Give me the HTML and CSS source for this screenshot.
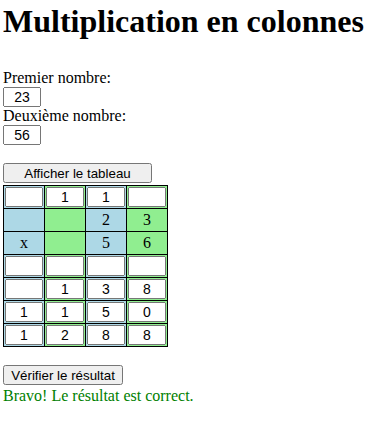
FILE: index.html
```html
<!DOCTYPE html>
<html lang="fr">
<head>
    <meta charset="UTF-8">
    <title>Multiplication en colonnes</title>
    <link rel="stylesheet" href="styles.css">
</head>
<body>
    <h1>Multiplication en colonnes</h1>
    <label for="nombre1">Premier nombre:</label><br>
    <input type="text" id="nombre1" class="nombre" value="23"><br>
    <label for="nombre2">Deuxième nombre:</label><br>
    <input type="text" id="nombre2" class="nombre" value="56"><br><br>
    <button id="afficherBtn">Afficher le tableau</button>

    <table id="tableau">
        <tr>
            <td class="bleu"><input type="text" class="case"></td>
            <td class="vert"><input type="text" class="case" value="1"></td>
            <td class="bleu"><input type="text" class="case" value="1"></td>
            <td class="vert"><input type="text" class="case"></td>
        </tr>
        <tr class="texte">
            <td class="bleu"></td>
            <td class="vert"></td>
            <td class="bleu">2</td>
            <td class="vert">3</td>
        </tr>
        <tr class="texte">
            <td class="bleu">x</td>
            <td class="vert"></td>
            <td class="bleu">5</td>
            <td class="vert">6</td>
        </tr>
        <tr>
            <td class="bleu"><input type="text" class="case"></td>
            <td class="vert"><input type="text" class="case"></td>
            <td class="bleu"><input type="text" class="case"></td>
            <td class="vert"><input type="text" class="case"></td>
        </tr>
        <tr>
            <td class="bleu"><input type="text" class="case"></td>
            <td class="vert"><input type="text" class="case" value="1"></td>
            <td class="bleu"><input type="text" class="case" value="3"></td>
            <td class="vert"><input type="text" class="case" value="8"></td>
        </tr>
        <tr>
            <td class="bleu"><input type="text" class="case" value="1"></td>
            <td class="vert"><input type="text" class="case" value="1"></td>
            <td class="bleu"><input type="text" class="case" value="5"></td>
            <td class="vert"><input type="text" class="case" value="0"></td>
        </tr>
        <tr>
            <td class="bleu"><input type="text" class="case" value="1"></td>
            <td class="vert"><input type="text" class="case" value="2"></td>
            <td class="bleu"><input type="text" class="case" value="8"></td>
            <td class="vert"><input type="text" class="case" value="8"></td>
        </tr>
    </table>
    <br>
    <button id="verifierBtn">Vérifier le résultat</button>
    <div id="message">Bravo! Le résultat est correct.</div>
</body>
</html>
```

FILE: styles.css
```css
body {
    font-family: "Liberation Serif", "Times New Roman", serif;
    font-size: 16px;
    margin: 3px;
}

h1 {
    font-size: 32px;
    margin: 0 0 29px 0;
}

input {
    font-family: "Liberation Sans", Arial, sans-serif;
    font-size: 14px;
    text-align: center;
    box-sizing: border-box;
    width: 38px;
    height: 20px;
    padding: 1px 2px;
}

button {
    font-family: "Liberation Sans", Arial, sans-serif;
    font-size: 13.33px;
    height: 20px;
}

#afficherBtn {
    width: 149px;
}

#verifierBtn {
    width: 120px;
}

table {
    border-collapse: collapse;
    border: 1px solid black;
    margin-top: 2px;
}

td {
    border: 1px solid black;
    padding: 1px;
    width: 38px;
    text-align: center;
}

tr.texte td {
    height: 20px;
}

.bleu {
    background-color: lightblue;
}

.vert {
    background-color: lightgreen;
}

#message {
    color: green;
    margin-top: 2px;
}
```
